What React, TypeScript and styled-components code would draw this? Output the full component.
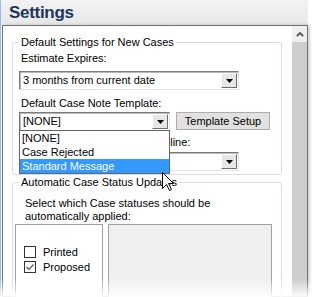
import styled, { createGlobalStyle } from 'styled-components';

const GlobalStyle = createGlobalStyle`
  html, body {
    margin: 0;
    padding: 0;
    background: #fff;
  }
  body {
    font-family: "Liberation Sans", Arial, sans-serif;
    font-size: 11px;
    color: #000;
  }
`;

const Screen = styled.div`
  position: relative;
  width: 312px;
  height: 297px;
  overflow: hidden;
  background: #fff;
`;

const Frame = styled.div`
  width: 308px;
  height: 297px;
  box-sizing: border-box;
  border-left: 1px solid #9cbbe0;
  display: flex;
  flex-direction: column;
`;

const TitleBar = styled.div`
  height: 25px;
  flex: none;
  padding-left: 8px;
  background: linear-gradient(#f3f3f3, #e7e7e7);
  color: #1b365d;
  font-size: 17px;
  font-weight: 700;
  letter-spacing: -0.3px;
  line-height: 25px;
`;

const Panel = styled.div`
  flex: 1;
  min-height: 0;
  margin-left: 1px;
  border: 1px solid #6f6f6f;
  background: #fff;
  display: flex;
  box-shadow: 2px 0 3px rgba(0, 0, 0, 0.18);
`;

const Content = styled.div`
  flex: 1;
  padding: 9px 10px 0 9px;
`;

const Scrollbar = styled.div`
  width: 15px;
  flex: none;
  display: flex;
  flex-direction: column;
`;

const ScrollButton = styled.div`
  height: 16px;
  background: #f0f0f0;
  display: flex;
  align-items: center;
  justify-content: center;
`;

const ScrollThumb = styled.div`
  flex: 1;
  background: #cdcdcd;
`;

const Group = styled.fieldset`
  margin: 0;
  padding: 0;
  min-width: 0;
  border: 1px solid #d5dfe5;
  border-radius: 3px;
`;

const Legend = styled.legend`
  margin-left: 6px;
  padding: 0 2px;
  line-height: 14px;
  font-size: 11px;
`;

const GroupBody = styled.div<{ $pad: number }>`
  display: flex;
  flex-direction: column;
  align-items: flex-start;
  padding: 0 6px ${p => p.$pad}px 6px;
`;

const Label = styled.div<{ $top: number }>`
  margin-top: ${p => p.$top}px;
  padding-left: 2px;
  line-height: 13px;
`;

const SelectBox = styled.div<{ $width: number; $top: number }>`
  position: relative;
  width: ${p => p.$width}px;
  height: 19px;
  margin-top: ${p => p.$top}px;
  box-sizing: border-box;
  border: 1px solid;
  border-color: #7a7a7a #e3e3e3 #e3e3e3 #7a7a7a;
  box-shadow: inset 1px 1px 0 #b9b9b9;
  background: #fff;
  display: flex;
  align-items: center;
`;

const SelectText = styled.div`
  flex: 1;
  padding-left: 3px;
  line-height: 17px;
  white-space: nowrap;
  overflow: hidden;
`;

const ArrowButton = styled.div`
  width: 16px;
  height: 15px;
  margin-right: 1px;
  box-sizing: border-box;
  border: 1px solid;
  border-color: #fff #6d6d6d #6d6d6d #fff;
  background: #e6e6e6;
  display: flex;
  align-items: center;
  justify-content: center;
`;

const InlineRow = styled.div<{ $top: number }>`
  display: flex;
  align-items: flex-start;
  gap: 6px;
  margin-top: ${p => p.$top}px;
`;

const Button = styled.button`
  width: 94px;
  height: 18px;
  margin: 0;
  padding: 0;
  border: 1px solid #adadad;
  background: #e1e1e1;
  font-family: "Liberation Sans", Arial, sans-serif;
  font-size: 11px;
  color: #000;
`;

const DropList = styled.div`
  position: absolute;
  top: 100%;
  left: -1px;
  right: -1px;
  z-index: 2;
  border: 1px solid #646464;
  background: #fff;
`;

const Option = styled.div<{ $active?: boolean }>`
  height: 14px;
  line-height: 14px;
  padding-left: 2px;
  background: ${p => (p.$active ? '#3399ff' : '#fff')};
  color: ${p => (p.$active ? '#fff' : '#000')};
`;

const Intro = styled.div`
  margin-top: 8px;
  padding-left: 6px;
  line-height: 13px;
`;

const ListRow = styled.div`
  display: flex;
  gap: 5px;
  margin-top: 1px;
  padding-left: 2px;
`;

const ListBox = styled.div<{ $width: number; $fill: string }>`
  width: ${p => p.$width}px;
  height: 80px;
  box-sizing: border-box;
  border: 1px solid #a0a0a0;
  background: ${p => p.$fill};
  padding: 19px 0 0 8px;
`;

const CheckRow = styled.div`
  display: flex;
  align-items: center;
  gap: 7px;
  height: 15px;
`;

const CheckBox = styled.div`
  width: 12px;
  height: 12px;
  box-sizing: border-box;
  border: 1px solid #333;
  background: #fff;
  display: flex;
  align-items: center;
  justify-content: center;
`;

const Cursor = styled.svg`
  position: absolute;
  left: 162px;
  top: 172px;
  z-index: 3;
`;

const Fade = styled.div`
  position: absolute;
  left: 0;
  right: 0;
  bottom: 0;
  height: 18px;
  background: linear-gradient(rgba(255, 255, 255, 0), rgba(255, 255, 255, 0.95));
  z-index: 4;
  pointer-events: none;
`;

function Triangle() {
  return (
    <svg width="7" height="4" viewBox="0 0 7 4">
      <polygon points="0,0 7,0 3.5,4" fill="#000" />
    </svg>
  );
}

function Check({ checked }: { checked: boolean }) {
  return (
    <CheckBox>
      {checked && (
        <svg width="10" height="10" viewBox="0 0 10 10">
          <polyline points="1.5,5 4,7.5 8.5,2.5" fill="none" stroke="#555" strokeWidth="1.2" />
        </svg>
      )}
    </CheckBox>
  );
}

export default function App() {
  return (
    <Screen>
      <GlobalStyle />
      <Frame>
        <TitleBar>Settings</TitleBar>
        <Panel>
          <Content>
            <Group>
              <Legend>Default Settings for New Cases</Legend>
              <GroupBody $pad={3}>
                <Label $top={3}>Estimate Expires:</Label>
                <SelectBox $width={220} $top={6}>
                  <SelectText>3 months from current date</SelectText>
                  <ArrowButton><Triangle /></ArrowButton>
                </SelectBox>
                <Label $top={7}>Default Case Note Template:</Label>
                <InlineRow $top={2}>
                  <SelectBox $width={151} $top={0}>
                    <SelectText>[NONE]</SelectText>
                    <ArrowButton><Triangle /></ArrowButton>
                    <DropList>
                      <Option>[NONE]</Option>
                      <Option>Case Rejected</Option>
                      <Option $active>Standard Message</Option>
                    </DropList>
                  </SelectBox>
                  <Button>Template Setup</Button>
                </InlineRow>
                <Label $top={5}>Default Note Completion Deadline:</Label>
                <SelectBox $width={220} $top={3}>
                  <SelectText></SelectText>
                  <ArrowButton><Triangle /></ArrowButton>
                </SelectBox>
              </GroupBody>
            </Group>
            <Group>
              <Legend>Automatic Case Status Updates</Legend>
              <GroupBody $pad={0}>
                <Intro>
                  Select which Case statuses should be
                  <br />
                  automatically applied:
                </Intro>
              </GroupBody>
              <ListRow>
                <ListBox $width={88} $fill="#fff">
                  <CheckRow>
                    <Check checked={false} />
                    Printed
                  </CheckRow>
                  <CheckRow>
                    <Check checked />
                    Proposed
                  </CheckRow>
                </ListBox>
                <ListBox $width={164} $fill="#efefef" />
              </ListRow>
            </Group>
          </Content>
          <Scrollbar>
            <ScrollButton>
              <svg width="8" height="5" viewBox="0 0 8 5">
                <polyline points="0.8,4.2 4,1 7.2,4.2" fill="none" stroke="#555" strokeWidth="1.8" />
              </svg>
            </ScrollButton>
            <ScrollThumb />
          </Scrollbar>
        </Panel>
      </Frame>
      <Cursor width="13" height="20" viewBox="0 0 13 20">
        <polygon
          points="0.5,0.5 0.5,16.5 4.5,12.5 7.5,18.5 9.5,17.5 6.5,11.5 11.5,11.5"
          fill="#fff"
          stroke="#000"
          strokeWidth="1"
          strokeLinejoin="miter"
        />
      </Cursor>
      <Fade />
    </Screen>
  );
}
